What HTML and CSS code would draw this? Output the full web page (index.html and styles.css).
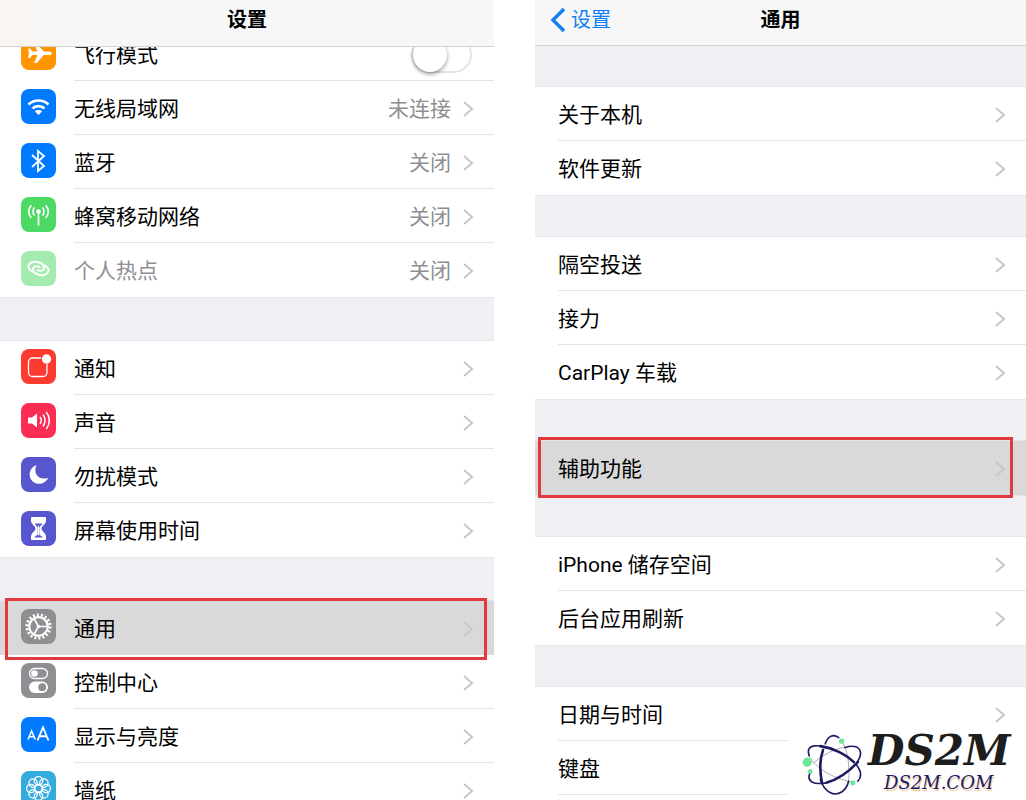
FILE: index.html
```html
<!DOCTYPE html>
<html lang="zh-CN">
<head>
	<meta charset="UTF-8">
	<meta name="viewport" content="width=device-width, initial-scale=1">
	<title>设置 - 通用</title>
	<link rel="stylesheet" href="styles.css">
</head>
<body>
	<!-- shared shapes -->
	<svg class="defs" width="0" height="0" aria-hidden="true">
		<symbol id="arrow" viewBox="0 0 12 18"><path d="M2 2l8 7-8 7" fill="none" stroke="currentColor" stroke-width="2"/></symbol>
	</svg>
	<div class="screens">
		<section class="phone">
			<header class="bar bar-scrolled">
				<h1>设置</h1>
			</header>
			<main class="list list-scrolled">
				<ul class="group">
					<li class="row">
						<svg class="icon orange" viewBox="0 0 35 35"><path d="M7 13.500h2l2.500 3h5l-3.500-8h3l6.600 8h5.500c3.500 0 3.500 3.600 0 3.600h-5.500l-6.600 8h-3l3.500-8h-5L9 23.100H7l1-4.800z" fill="#fff"/></svg>
						<div class="body">
							<label class="label" for="flight">飞行模式</label>
							<input type="checkbox" class="switch" id="flight">
						</div>
					</li>
					<li class="row">
						<svg class="icon blue" viewBox="0 0 35 35"><g fill="none" stroke="#fff" stroke-width="2.600"><path d="M7.500 15.500c5.500-5.300 14.500-5.300 20 0M11.500 19.500c3.300-3.200 8.700-3.200 12 0"/></g><path d="M17.500 26l-3.700-3.700c2-1.900 5.400-1.900 7.400 0z" fill="#fff"/></svg>
						<a class="body" href="#"><span class="label">无线局域网</span><span class="value">未连接</span><svg class="arrow"><use href="#arrow"/></svg></a>
					</li>
					<li class="row">
						<svg class="icon blue" viewBox="0 0 35 35"><path d="M11 12l12 11-6 5v-20l6 5-12 11" fill="none" stroke="#fff" stroke-width="1.800"/></svg>
						<a class="body" href="#"><span class="label">蓝牙</span><span class="value">关闭</span><svg class="arrow"><use href="#arrow"/></svg></a>
					</li>
					<li class="row">
						<svg class="icon green" viewBox="0 0 35 35"><circle cx="17.500" cy="14.500" r="2.300" fill="#fff"/><path d="M17.500 15v13.500M13.500 10.500c-2 2.200-2 5.800 0 8M21.500 10.500c2 2.200 2 5.800 0 8M10.300 8.300c-3.500 3.500-3.500 9 0 12.500M24.700 8.300c3.500 3.500 3.500 9 0 12.500" fill="none" stroke="#fff" stroke-width="1.700"/></svg>
						<a class="body" href="#"><span class="label">蜂窝移动网络</span><span class="value">关闭</span><svg class="arrow"><use href="#arrow"/></svg></a>
					</li>
					<li class="row off">
						<svg class="icon green" viewBox="0 0 35 35"><g fill="none" stroke="#fff" stroke-width="2" stroke-linecap="round"><path d="M11.500 20.500c-4-1.500-5.200-5-2.900-7.700 3-3.800 13-1.800 14.400 3.200.8 3-3.500 5-6.500 3"/><path d="M23.500 14.500c4 1.500 5.200 5 2.900 7.700-3 3.800-13 1.800-14.400-3.200-.8-3 3.500-5 6.500-3"/></g></svg>
						<a class="body" href="#"><span class="label">个人热点</span><span class="value">关闭</span><svg class="arrow"><use href="#arrow"/></svg></a>
					</li>
				</ul>
				<ul class="group">
					<li class="row">
						<svg class="icon red" viewBox="0 0 35 35"><path d="M20 9h-8.500a4 4 0 0 0-4 4v10.500a4 4 0 0 0 4 4H22a4 4 0 0 0 4-4V15" fill="none" stroke="#fff" stroke-width="1.300"/><circle cx="25.500" cy="10" r="4.700" fill="#fff"/></svg>
						<a class="body" href="#"><span class="label">通知</span><svg class="arrow"><use href="#arrow"/></svg></a>
					</li>
					<li class="row">
						<svg class="icon pink" viewBox="0 0 35 35"><path d="M7 14.500h4l5-4v14l-5-4H7z" fill="#fff"/><path d="M19 14c1.500 2 1.500 5 0 7M22 11.500c2.700 3.500 2.700 8.500 0 12M25.300 9c4 5 4 12 0 17" fill="none" stroke="#fff" stroke-width="1.500"/></svg>
						<a class="body" href="#"><span class="label">声音</span><svg class="arrow"><use href="#arrow"/></svg></a>
					</li>
					<li class="row">
						<svg class="icon purple" viewBox="0 0 35 35"><path d="M15.500 8C7 11 6.500 22 13.500 25.700c5 2.500 11 .5 13.700-5C18.500 24 11.500 17 15.500 8z" fill="#fff"/></svg>
						<a class="body" href="#"><span class="label">勿扰模式</span><svg class="arrow"><use href="#arrow"/></svg></a>
					</li>
					<li class="row">
						<svg class="icon purple" viewBox="0 0 35 35"><path d="M11 6h13q1 0 1 1v3c0 3-4.500 5-4.500 7.500S25 22 25 25.500V28q0 1-1 1H11q-1 0-1-1v-2.500c0-3.500 4.500-5.500 4.500-8S10 13 10 10V7q0-1 1-1z" fill="#fff"/><path d="M13.500 12.500h8l-3.200 4v7l3.700 3h-9l3.700-3v-7z" fill="#5756ce"/><path d="M17.500 14.500v10" stroke="#fff" stroke-width="1"/></svg>
						<a class="body" href="#"><span class="label">屏幕使用时间</span><svg class="arrow"><use href="#arrow"/></svg></a>
					</li>
				</ul>
				<ul class="group">
					<li class="row selected">
						<svg class="icon gray" viewBox="0 0 35 35"><g fill="none" stroke="#fff"><circle cx="17.500" cy="17.500" r="11.600" stroke-width="3" stroke-dasharray="2 2.050"/><circle cx="17.500" cy="17.500" r="9.300" stroke-width="2.200"/><path d="M17.500 17.500h9M17.500 17.500l-4.600-8M17.500 17.500l-4.600 8" stroke-width="1.600"/></g><circle cx="17.500" cy="17.500" r="1.800" fill="#fff"/></svg>
						<a class="body" href="#"><span class="label">通用</span><svg class="arrow"><use href="#arrow"/></svg></a>
					</li>
					<li class="row">
						<svg class="icon gray" viewBox="0 0 35 35"><rect x="8.500" y="5.500" width="18" height="10" rx="5" fill="none" stroke="#fff" stroke-width="1.300"/><circle cx="13.500" cy="10.500" r="3.300" fill="#fff"/><rect x="8" y="18.500" width="19" height="11.500" rx="5.700" fill="#fff"/><circle cx="21.200" cy="24.200" r="3.900" fill="#8e8e93"/></svg>
						<a class="body" href="#"><span class="label">控制中心</span><svg class="arrow"><use href="#arrow"/></svg></a>
					</li>
					<li class="row">
						<svg class="icon blue" viewBox="0 0 35 35"><g fill="none" stroke="#fff"><path d="M7 22.500l3.600-8.500 3.600 8.500M8.300 19.700h4.700" stroke-width="1.600"/><path d="M16.500 23.500l5.500-13 5.500 13M18.500 19.300h7" stroke-width="1.900"/></g></svg>
						<a class="body" href="#"><span class="label">显示与亮度</span><svg class="arrow"><use href="#arrow"/></svg></a>
					</li>
					<li class="row">
						<svg class="icon cyan" viewBox="0 0 35 35"><g fill="none" stroke="#fff" stroke-width="1.300"><circle cx="17.500" cy="9.800" r="4.200"/><circle cx="22.900" cy="12.100" r="4.200"/><circle cx="25.200" cy="17.500" r="4.200"/><circle cx="22.900" cy="22.900" r="4.200"/><circle cx="17.500" cy="25.200" r="4.200"/><circle cx="12.100" cy="22.900" r="4.200"/><circle cx="9.800" cy="17.500" r="4.200"/><circle cx="12.100" cy="12.100" r="4.200"/><circle cx="17.500" cy="17.500" r="4"/></g></svg>
						<a class="body" href="#"><span class="label">墙纸</span><svg class="arrow"><use href="#arrow"/></svg></a>
					</li>
				</ul>
			</main>
		</section>

		<section class="phone">
			<header class="bar">
				<a class="back" href="#"><svg viewBox="0 0 16 26"><path d="M14 2L3 13l11 11" fill="none" stroke="currentColor" stroke-width="3.400"/></svg>设置</a>
				<h1>通用</h1>
			</header>
			<main class="list list-detail">
				<ul class="group">
					<li class="row"><a class="body" href="#"><span class="label">关于本机</span><svg class="arrow"><use href="#arrow"/></svg></a></li>
					<li class="row"><a class="body" href="#"><span class="label">软件更新</span><svg class="arrow"><use href="#arrow"/></svg></a></li>
				</ul>
				<ul class="group">
					<li class="row"><a class="body" href="#"><span class="label">隔空投送</span><svg class="arrow"><use href="#arrow"/></svg></a></li>
					<li class="row"><a class="body" href="#"><span class="label">接力</span><svg class="arrow"><use href="#arrow"/></svg></a></li>
					<li class="row"><a class="body" href="#"><span class="label">CarPlay 车载</span><svg class="arrow"><use href="#arrow"/></svg></a></li>
				</ul>
				<ul class="group">
					<li class="row selected"><a class="body" href="#"><span class="label">辅助功能</span><svg class="arrow"><use href="#arrow"/></svg></a></li>
				</ul>
				<ul class="group">
					<li class="row"><a class="body" href="#"><span class="label">iPhone 储存空间</span><svg class="arrow"><use href="#arrow"/></svg></a></li>
					<li class="row"><a class="body" href="#"><span class="label">后台应用刷新</span><svg class="arrow"><use href="#arrow"/></svg></a></li>
				</ul>
				<ul class="group">
					<li class="row"><a class="body" href="#"><span class="label">日期与时间</span><svg class="arrow"><use href="#arrow"/></svg></a></li>
					<li class="row"><a class="body" href="#"><span class="label">键盘</span><svg class="arrow"><use href="#arrow"/></svg></a></li>
				</ul>
			</main>
			<div class="watermark">
				<svg viewBox="60 40 195 195">
					<g fill="none" stroke="#aaaab4" stroke-width="3">
						<path d="M208 190C213 145 205 90 185 65M215 192C160 180 105 150 88 112M100 135C130 110 165 90 197 87"/>
					</g>
					<g fill="none" stroke="#1d1c62" stroke-width="5" stroke-linecap="round">
						<path d="M137 76C145 50 162 46 178 57M122 185C135 225 165 238 188 222C200 213 206 200 208 190"/>
						<path d="M88 112C76 78 110 76 150 90M232 140C247 160 248 178 236 190"/>
						<path d="M197 87C240 75 260 98 230 138M140 195C100 202 80 190 90 166"/>
					</g>
					<g fill="none" stroke="#1d1c62" stroke-width="8" stroke-linecap="round">
						<path d="M130 95C118 130 121 165 127 195M122 83C160 88 200 108 224 132M236 132C205 165 175 185 142 194"/>
					</g>
					<g fill="#6ee79b"><circle cx="82" cy="132" r="14"/><circle cx="91" cy="160" r="7"/><circle cx="187" cy="68" r="8"/><circle cx="221" cy="195" r="8"/></g>
				</svg>
				<p><strong>DS2M</strong><span>DS2M.COM</span></p>
			</div>
		</section>
	</div>
</body>
</html>
```

FILE: styles.css
```css
*{
	margin: 0;
	padding: 0;
	box-sizing: border-box;
}
body{
	background: #fff;
	color: #000;
	font: 21px/30px Roboto, "Noto Sans CJK SC", sans-serif;
}
a{
	color: inherit;
	text-decoration: none;
}
ul{
	list-style: none;
}
.defs{
	position: absolute;
}
.screens{
	display: grid;
	grid-template-columns: 494fr 491fr;
	gap: 41px;
	height: 100vh;
}
.phone{
	position: relative;
	display: flex;
	flex-direction: column;
	min-height: 0;
	overflow: hidden;
	background: #efeff4;
}

/* top bar */
.bar{
	position: relative;
	z-index: 1;
	display: grid;
	grid-template-columns: 1fr auto 1fr;
	align-items: center;
	flex: none;
	height: 46px;
	padding-bottom: 6px;
	background: #f7f7f8;
	border-bottom: 1px solid #d3d3d6;
}
.bar-scrolled{
	height: 47px;
	background: linear-gradient(90deg, #f9f6f3, #f7f7f8 30%);
}
.bar h1{
	grid-column: 2;
	font-size: 20px;
	font-weight: 600;
}
.back{
	display: flex;
	align-items: center;
	gap: 5px;
	padding-left: 15px;
	color: #0f80f2;
	font-size: 20px;
}
.back svg{
	width: 16px;
	height: 26px;
}

/* lists */
.list{
	display: flex;
	flex-direction: column;
	flex: 1;
	gap: 44px;
}
.list-scrolled{
	margin-top: -20px;
}
.list-detail{
	gap: 42px;
	padding-top: 41px;
}
.group{
	flex: none;
	background: #fff;
	box-shadow: 0 0 0 1px #e6e6ea;
}
.group:last-child{
	flex: 1 0 auto;
}
.row{
	position: relative;
	display: flex;
	align-items: center;
	height: 54px;
	padding-left: 21px;
}
.list-detail .row{
	padding-left: 23px;
}
.icon{
	flex: none;
	width: 35px;
	height: 35px;
	margin: 0 18px 3px 0;
	border-radius: 8px;
}
.body{
	display: flex;
	align-items: center;
	flex: 1;
	height: 54px;
	padding: 2px 20px 0 0;
	border-bottom: 1px solid #e4e4e6;
}
.group:not(:last-child) .row:last-child .body,
.selected .body{
	border-bottom-color: transparent;
}
.label{
	flex: 1;
}
.value{
	margin-right: 11px;
	color: #8e8e93;
}
.arrow{
	width: 12px;
	height: 18px;
	color: #c7c7cc;
}
.off .label{
	color: #8e8e93;
}
.off .icon{
	opacity: .5;
}
.selected{
	background: #d9d9d9;
}
.selected .arrow{
	color: #c8c8cb;
}
/* red frame round the selected row */
.selected::after{
	content: "";
	position: absolute;
	z-index: 1;
	top: -3px;
	right: 7px;
	bottom: -5px;
	left: 5px;
	border: 3px solid #e0393e;
	pointer-events: none;
}
.list-detail .selected::after{
	top: -4px;
	right: 13px;
	bottom: -3px;
	left: 3px;
}

.orange{ background: #ff9500; }
.blue{ background: #007aff; }
.green{ background: #4cd964; }
.red{ background: #fc3b30; }
.pink{ background: #fc2d55; }
.purple{ background: #5756ce; }
.gray{ background: #8e8e93; }
.cyan{ background: #35aadc; }

.switch{
	appearance: none;
	width: 61px;
	height: 37px;
	margin-right: 2px;
	border: 2px solid #e4e4e4;
	border-radius: 19px;
	background: #fff;
}
.switch::before{
	content: "";
	display: block;
	width: 34px;
	height: 34px;
	border-radius: 50%;
	background: #fff;
	box-shadow: 0 2px 4px rgba(0,0,0,.4);
}
.switch:checked{
	border-color: #4cd964;
	background: #4cd964;
}
.switch:checked::before{
	margin-left: auto;
}

/* site mark */
.watermark{
	position: absolute;
	right: 0;
	bottom: 0;
	z-index: 2;
	display: flex;
	align-items: center;
	gap: 4px;
	width: 238px;
	height: 72px;
	padding-left: 12px;
	background: #fff;
}
.watermark svg{
	flex: none;
	width: 64px;
	height: 64px;
}
.watermark p{
	display: flex;
	flex-direction: column;
	font-family: "DejaVu Serif", serif;
	font-style: italic;
}
.watermark strong{
	color: #1d1d1d;
	font-size: 42px;
	line-height: 38px;
}
.watermark span{
	padding-left: 16px;
	color: #1d1c62;
	font-size: 18px;
	line-height: 26px;
	text-shadow: 1px 2px 1px #f0c8a0;
}
```
